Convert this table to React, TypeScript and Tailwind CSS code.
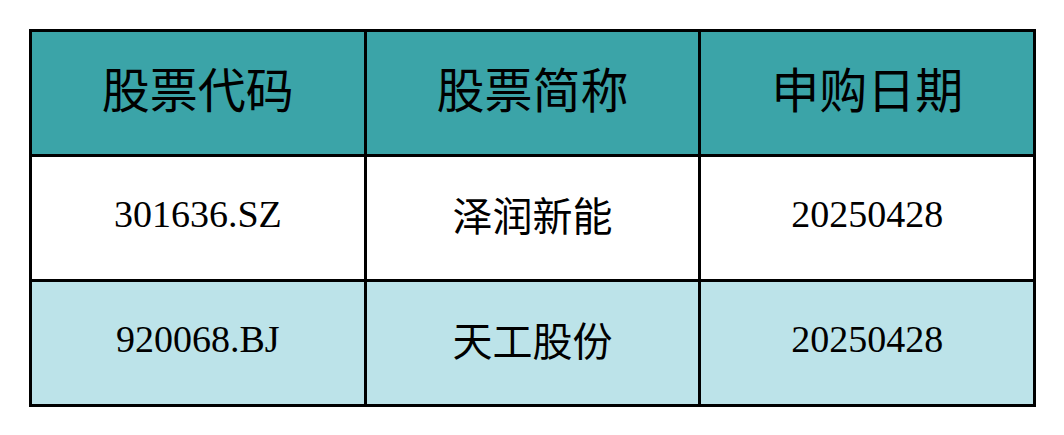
import React from "react";

const cjk = { fontFamily: '"Noto Sans CJK SC", "Noto Sans CJK JP", sans-serif' };
const serif = { fontFamily: '"Liberation Serif", "Times New Roman", serif' };

type Cell = { text: string; cjk: boolean };

const rows: { bg: string; cells: Cell[] }[] = [
  {
    bg: "bg-[#ffffff]",
    cells: [
      { text: "301636.SZ", cjk: false },
      { text: "泽润新能", cjk: true },
      { text: "20250428", cjk: false },
    ],
  },
  {
    bg: "bg-[#bce3e9]",
    cells: [
      { text: "920068.BJ", cjk: false },
      { text: "天工股份", cjk: true },
      { text: "20250428", cjk: false },
    ],
  },
];

const headers = ["股票代码", "股票简称", "申购日期"];

export default function App() {
  return (
    <div className="w-[1064px] h-[435px] bg-white pt-[29px] pl-[29px]">
      <div className="w-[1007px] h-[378px] bg-black p-[3px] grid grid-cols-3 grid-rows-3 gap-[3px]">
        {headers.map((h) => (
          <div
            key={h}
            className="bg-[#3ba4a8] flex items-center justify-center text-[48px] text-black leading-none pb-[12px]"
            style={cjk}
          >
            {h}
          </div>
        ))}
        {rows.map((r, i) =>
          r.cells.map((c, j) => (
            <div
              key={`${i}-${j}`}
              className={`${r.bg} flex items-center justify-center text-black leading-none ${
                c.cjk ? "text-[40px] pb-[8px]" : "text-[38px] pb-[8px]"
              }`}
              style={c.cjk ? cjk : serif}
            >
              {c.text}
            </div>
          ))
        )}
      </div>
    </div>
  );
}
